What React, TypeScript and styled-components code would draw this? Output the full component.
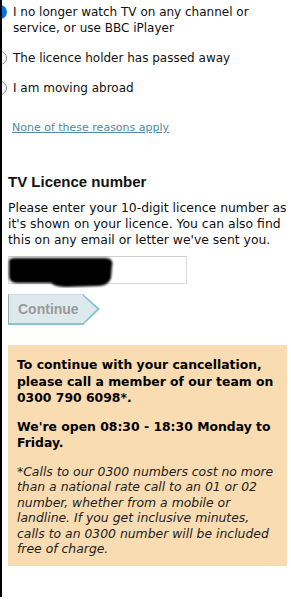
import styled, { createGlobalStyle } from 'styled-components';

const GlobalStyle = createGlobalStyle`
  html, body {
    margin: 0;
    padding: 0;
    background: #fff;
  }
  body {
    font-family: "DejaVu Sans", Verdana, sans-serif;
    color: #111;
  }
`;

const reasons = [
  { text: 'I no longer watch TV on any channel or service, or use BBC iPlayer', checked: true },
  { text: 'The licence holder has passed away', checked: false },
  { text: 'I am moving abroad', checked: false },
];

export default function App() {
  return (
    <>
      <GlobalStyle />
      <Page>
        <ReasonList>
          {reasons.map(r => (
            <Reason key={r.text}>
              <Radio $checked={r.checked} />
              <ReasonText>{r.text}</ReasonText>
            </Reason>
          ))}
        </ReasonList>
        <NoneLink href="#">None of these reasons apply</NoneLink>

        <Heading>TV Licence number</Heading>
        <Intro>
          Please enter your 10-digit licence number as it's shown on your licence. You can also find
          this on any email or letter we've sent you.
        </Intro>
        <InputWrap>
          <LicenceInput type="text" />
          <Redaction viewBox="0 0 110 32" aria-hidden>
            <defs>
              <filter id="soft">
                <feGaussianBlur stdDeviation="1.3" />
              </filter>
            </defs>
            <path
              d="M2 5 Q2 2 8 2 L98 2 Q107 2 105 10 L104 22 Q102 29 92 30 L60 31 Q48 31 44 27 L10 27 Q2 27 2 20 Z"
              fill="#000"
              filter="url(#soft)"
            />
          </Redaction>
        </InputWrap>
        <ContinueButton disabled>Continue</ContinueButton>

        <Notice>
          <NoticeStrong>
            To continue with your cancellation, please call a member of our team on 0300 790 6098*.
          </NoticeStrong>
          <NoticeStrong>We're open 08:30 - 18:30 Monday to Friday.</NoticeStrong>
          <NoticeSmall>
            *Calls to our 0300 numbers cost no more than a national rate call to an 01 or 02 number,
            whether from a mobile or landline. If you get inclusive minutes, calls to an 0300 number
            will be included free of charge.
          </NoticeSmall>
        </Notice>
        <Footer>
          Instead you can use the cancel form to let us know and we will be in touch with you.
        </Footer>
      </Page>
    </>
  );
}

const Page = styled.div`
  height: 597px;
  border-left: 2px solid #000;
  overflow: hidden;
  padding: 4px 4px 0 6px;
  box-sizing: border-box;
  font-size: 12.4px;
  line-height: 16px;
`;

const ReasonList = styled.ul`
  list-style: none;
  margin: 0;
  padding: 0;
`;

const Reason = styled.li`
  display: flex;
  align-items: flex-start;
  gap: 6px;
  margin-bottom: 14px;
  margin-left: -15px;
`;

const Radio = styled.span<{ $checked: boolean }>`
  flex: none;
  width: 14px;
  height: 14px;
  margin-top: 1px;
  border-radius: 50%;
  box-sizing: border-box;
  border: ${p => (p.$checked ? '5px solid #0a6fe8' : '1px solid #8d8d8d')};
  background: #fff;
`;

const ReasonText = styled.span`
  font-size: 12px;
  color: #111;
`;

const NoneLink = styled.a`
  display: inline-block;
  margin: 11px 0 0 4px;
  font-size: 11px;
  line-height: 14px;
  color: #4f8aa6;
  text-decoration: underline;
`;

const Heading = styled.h2`
  margin: 38px 0 0;
  font-family: "Liberation Sans", Arial, sans-serif;
  font-size: 15px;
  line-height: 18px;
  font-weight: bold;
  color: #111;
`;

const Intro = styled.p`
  margin: 9px 0 0;
`;

const InputWrap = styled.div`
  position: relative;
  margin-top: 8px;
  width: 179px;
`;

const LicenceInput = styled.input`
  display: block;
  width: 179px;
  height: 28px;
  box-sizing: border-box;
  border: 1px solid #dcdcdc;
  border-top-color: #cfcfcf;
  background: #fff;
  margin: 0;
`;

const Redaction = styled.svg`
  position: absolute;
  left: -1px;
  top: 0;
  width: 110px;
  height: 32px;
`;

const ContinueButton = styled.button`
  position: relative;
  display: block;
  margin-top: 10px;
  height: 31px;
  width: 76px;
  padding: 0 0 0 9px;
  box-sizing: border-box;
  background: #dde9ed;
  border: 1px solid #cfdde2;
  border-bottom: 2px solid #86c5d0;
  border-left: 1px solid #9aa;
  font-family: "Liberation Sans", Arial, sans-serif;
  font-weight: bold;
  font-size: 14px;
  color: #999;
  text-align: left;

  &::after {
    content: '';
    position: absolute;
    right: -17px;
    top: -1px;
    width: 0;
    height: 0;
    border-top: 15px solid transparent;
    border-bottom: 16px solid transparent;
    border-left: 17px solid #86c5d0;
  }
  &::before {
    content: '';
    position: absolute;
    right: -14px;
    top: 1px;
    width: 0;
    height: 0;
    border-top: 13px solid transparent;
    border-bottom: 14px solid transparent;
    border-left: 14px solid #dde9ed;
    z-index: 1;
  }
`;

const Notice = styled.div`
  margin-top: 20px;
  width: 279px;
  box-sizing: border-box;
  background: #f9dcb1;
  padding: 12px 8px 9px 9px;
`;

const NoticeStrong = styled.p`
  margin: 0 0 12px;
  font-weight: bold;
  line-height: 16.5px;
  color: #000;
`;

const NoticeSmall = styled.p`
  margin: 0;
  font-style: italic;
  line-height: 15.5px;
  color: #222;
`;

const Footer = styled.p`
  margin: 30px 0 0;
  color: #111;
`;
